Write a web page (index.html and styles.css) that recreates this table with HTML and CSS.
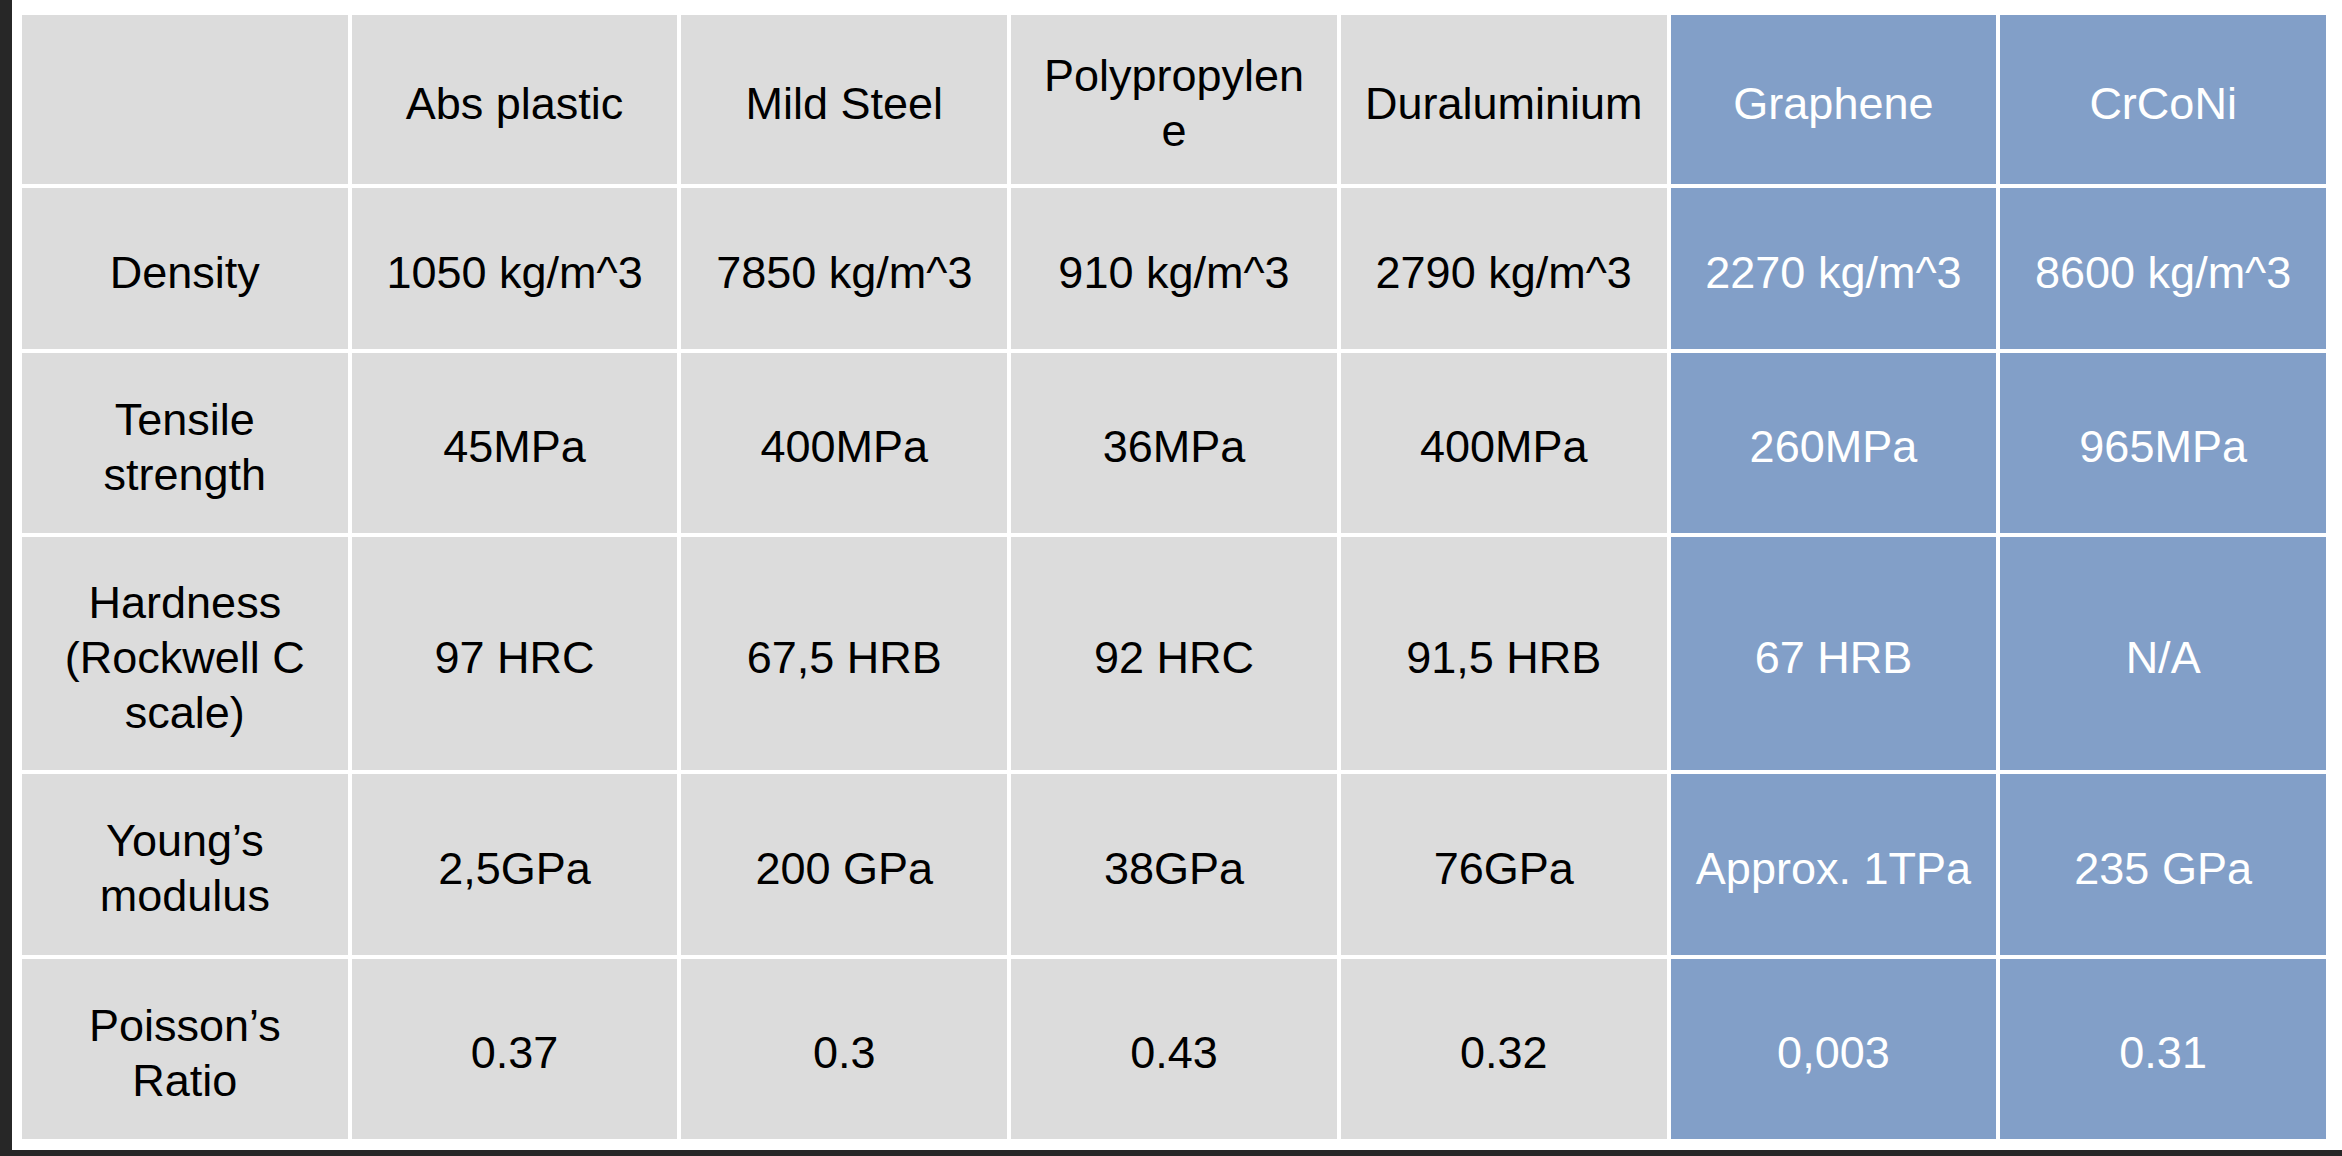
FILE: index.html
```html
<!DOCTYPE html>
<html lang="en">
<head>
<meta charset="utf-8">
<title>Material comparison</title>
<link rel="stylesheet" href="styles.css">
</head>
<body>
<div class="frame">
  <div class="sheet">
    <div class="table">
      <div class="cell"></div>
      <div class="cell">Abs plastic</div>
      <div class="cell">Mild Steel</div>
      <div class="cell">Polypropylen<br>e</div>
      <div class="cell">Duraluminium</div>
      <div class="cell blue">Graphene</div>
      <div class="cell blue">CrCoNi</div>

      <div class="cell">Density</div>
      <div class="cell">1050 kg/m^3</div>
      <div class="cell">7850 kg/m^3</div>
      <div class="cell">910 kg/m^3</div>
      <div class="cell">2790 kg/m^3</div>
      <div class="cell blue">2270 kg/m^3</div>
      <div class="cell blue">8600 kg/m^3</div>

      <div class="cell">Tensile<br>strength</div>
      <div class="cell">45MPa</div>
      <div class="cell">400MPa</div>
      <div class="cell">36MPa</div>
      <div class="cell">400MPa</div>
      <div class="cell blue">260MPa</div>
      <div class="cell blue">965MPa</div>

      <div class="cell">Hardness<br>(Rockwell C<br>scale)</div>
      <div class="cell">97 HRC</div>
      <div class="cell">67,5 HRB</div>
      <div class="cell">92 HRC</div>
      <div class="cell">91,5 HRB</div>
      <div class="cell blue">67 HRB</div>
      <div class="cell blue">N/A</div>

      <div class="cell">Young’s<br>modulus</div>
      <div class="cell">2,5GPa</div>
      <div class="cell">200 GPa</div>
      <div class="cell">38GPa</div>
      <div class="cell">76GPa</div>
      <div class="cell blue">Approx. 1TPa</div>
      <div class="cell blue">235 GPa</div>

      <div class="cell">Poisson’s<br>Ratio</div>
      <div class="cell">0.37</div>
      <div class="cell">0.3</div>
      <div class="cell">0.43</div>
      <div class="cell">0.32</div>
      <div class="cell blue">0,003</div>
      <div class="cell blue">0.31</div>
    </div>
  </div>
</div>
</body>
</html>
```

FILE: styles.css
```css
html, body {
  margin: 0;
  padding: 0;
  background: #272727;
}

.frame {
  width: 2342px;
  height: 1156px;
  display: flex;
  flex-direction: column;
  padding-left: 12px;
  box-sizing: border-box;
}

.sheet {
  background: #ffffff;
  height: 1150px;
  padding: 15px 16px 0 10px;
  box-sizing: border-box;
}

.table {
  display: grid;
  grid-template-columns: repeat(7, 1fr);
  grid-template-rows: 169px 161px 180px 233px 181px 180px;
  gap: 4px;
  font-family: "Liberation Sans", Arial, Helvetica, sans-serif;
  font-size: 45px;
  line-height: 55px;
  color: #000000;
}

.cell {
  background: #dcdcdc;
  display: flex;
  align-items: center;
  justify-content: center;
  text-align: center;
  white-space: nowrap;
  padding-top: 7px;
  box-sizing: border-box;
}

.cell.blue {
  background: #829fc8;
  color: #ffffff;
}
```
